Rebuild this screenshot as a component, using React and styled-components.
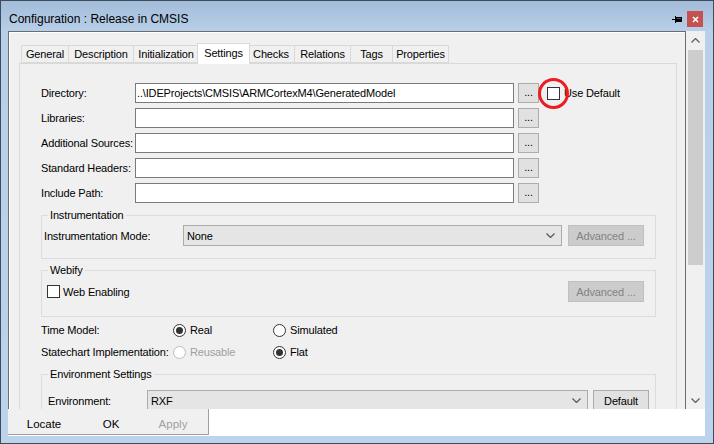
import React from "react";
import styled, { createGlobalStyle } from "styled-components";

const GlobalStyle = createGlobalStyle`
  html, body { margin: 0; padding: 0; background: #fff; }
  body {
    font-family: "Liberation Sans", Arial, sans-serif;
    font-size: 11px;
    letter-spacing: -0.15px;
    color: #000;
  }
  * { box-sizing: border-box; }
`;

const Window = styled.div`
  width: 714px;
  height: 444px;
  display: flex;
  flex-direction: column;
  border: 1px solid #3f4c5c;
  background: linear-gradient(#a3bcd9 0, #b7cfe8 30px, #bcd3eb 100%);
  padding: 0 8px 7px 7px;
`;

const TitleBar = styled.div`
  height: 30px;
  flex: none;
  display: flex;
  align-items: center;
  padding-top: 6px;
`;

const Title = styled.div`
  flex: 1;
  font-size: 12px;
  letter-spacing: 0;
  padding-left: 1px;
`;

const Pin = styled.svg`
  margin-right: 5px;
  display: block;
`;

const CloseBox = styled.div`
  width: 16px;
  height: 16px;
  margin-right: 2px;
  background: #c75050;
  display: flex;
  align-items: center;
  justify-content: center;
`;

const Client = styled.div`
  flex: 1;
  display: flex;
  flex-direction: column;
  background: #fff;
  min-height: 0;
`;

const ScrollArea = styled.div`
  height: 378px;
  flex: none;
  display: flex;
`;

const Viewport = styled.div`
  flex: 1;
  overflow: hidden;
  background: #f0f0f0;
  border: 1px solid #6d6d6d;
  border-bottom: none;
  box-shadow: inset 1px 1px 0 #fff;
  padding: 11px 8px 0 10px;
`;

const Scrollbar = styled.div`
  width: 19px;
  flex: none;
  background: #f0f0f0;
  display: flex;
  flex-direction: column;
`;

const ArrowBox = styled.div`
  height: 17px;
  flex: none;
  display: flex;
  align-items: center;
  justify-content: center;
  margin-top: ${(p) => (p.$top ? "1px" : "0")};
`;

const Thumb = styled.div`
  height: 215px;
  margin: 1px 2px 0 2px;
  background: #cdcdcd;
`;

const Spacer = styled.div`
  flex: 1;
`;

const BottomBar = styled.div`
  flex: 1;
  display: flex;
  background: #fff;
`;

const Toolbar = styled.div`
  width: 201px;
  height: 26px;
  display: flex;
  background: #f0f0f0;
  border-right: 1px solid #a0a0a0;
  border-bottom: 1px solid #a0a0a0;
`;

const ToolButton = styled.button`
  width: ${(p) => p.$w}px;
  height: 100%;
  border: none;
  background: transparent;
  padding: 4px 0 0 0;
  font-family: inherit;
  font-size: 11.5px;
  letter-spacing: 0;
  color: ${(p) => (p.disabled ? "#a0a0a0" : "#000")};
`;

const TabStrip = styled.div`
  display: flex;
  align-items: flex-end;
  height: 20px;
  padding-left: 2px;
  position: relative;
  z-index: 1;
`;

const Tab = styled.div`
  width: ${(p) => p.$w}px;
  height: ${(p) => (p.$active ? 21 : 18)}px;
  margin: ${(p) => (p.$active ? "0 -2px -1px -2px" : "0 0 0 -1px")};
  border: 1px solid #d9d9d9;
  border-bottom: ${(p) => (p.$active ? "none" : "1px solid #d9d9d9")};
  background: ${(p) => (p.$active ? "#fff" : "#f0f0f0")};
  display: flex;
  align-items: center;
  justify-content: center;
  white-space: nowrap;
  padding-bottom: ${(p) => (p.$active ? "3px" : "0")};
  position: relative;
  z-index: ${(p) => (p.$active ? 2 : 1)};
  &:first-child { margin-left: ${(p) => (p.$active ? "-2px" : "0")}; }
`;

const Panel = styled.div`
  width: 658px;
  border: 1px solid #d9d9d9;
  background: #f0f0f0;
  padding: 19px 20px 40px 21px;
`;

const PathRows = styled.div`
  display: flex;
  flex-direction: column;
  gap: 5px;
`;

const PathRow = styled.div`
  display: flex;
  align-items: center;
  height: 20px;
`;

const Label = styled.div`
  width: ${(p) => p.$w}px;
  flex: none;
  white-space: nowrap;
  color: ${(p) => (p.$muted ? "#a0a0a0" : "#000")};
`;

const TextField = styled.input`
  width: 379px;
  height: 20px;
  border: 1px solid #7a7a7a;
  background: #fff;
  font-family: inherit;
  font-size: 11px;
  letter-spacing: -0.15px;
  padding: 0 1px;
  color: #000;
  outline: none;
`;

const SmallButton = styled.div`
  width: 21px;
  height: 20px;
  margin-left: 4px;
  background: #e1e1e1;
  border: 1px solid #adadad;
  display: flex;
  align-items: flex-end;
  justify-content: center;
  padding-bottom: 4px;
  line-height: 1;
`;

const CheckWrap = styled.label`
  display: flex;
  align-items: center;
  gap: ${(p) => p.$gap}px;
  margin-left: ${(p) => p.$ml || 0}px;
  white-space: nowrap;
  position: relative;
`;

const Box = styled.span`
  width: 13px;
  height: 13px;
  border: 1px solid #333;
  background: #fff;
  display: block;
  flex: none;
`;

const Highlight = styled.span`
  position: absolute;
  left: -9px;
  top: 50%;
  width: 31px;
  height: 31px;
  margin-top: -15.5px;
  border: 3.5px solid #ed1c24;
  border-radius: 50%;
`;

const Group = styled.fieldset`
  margin: ${(p) => p.$mt}px 0 0 0;
  width: 615px;
  padding: 0;
  border: 1px solid #dcdcdc;
  min-width: 0;
`;

const Legend = styled.legend`
  margin-left: 6px;
  padding: 0 2px;
  line-height: 12px;
  font-size: 11px;
`;

const GroupBody = styled.div`
  display: flex;
  align-items: center;
  justify-content: ${(p) => (p.$split ? "space-between" : "flex-start")};
  padding: ${(p) => p.$pad};
`;

const Combo = styled.div`
  width: ${(p) => p.$w}px;
  height: 21px;
  flex: none;
  background: #e5e5e5;
  border: 1px solid #acacac;
  display: flex;
  align-items: center;
  justify-content: space-between;
  padding: 0 6px 0 3px;
`;

const PushButton = styled.div`
  width: ${(p) => p.$w}px;
  height: 21px;
  flex: none;
  margin-left: ${(p) => p.$ml || 0}px;
  background: ${(p) => (p.$disabled ? "#cccccc" : "#e1e1e1")};
  border: 1px solid ${(p) => (p.$disabled ? "#bfbfbf" : "#adadad")};
  color: ${(p) => (p.$disabled ? "#838383" : "#000")};
  display: flex;
  align-items: center;
  justify-content: center;
  white-space: nowrap;
`;

const RadioGrid = styled.div`
  display: grid;
  grid-template-columns: 132px 100px auto;
  grid-auto-rows: 18px;
  row-gap: 4px;
  align-items: center;
  margin-top: 4px;
`;

const RadioItem = styled.label`
  display: flex;
  align-items: center;
  gap: 4px;
  white-space: nowrap;
  color: ${(p) => (p.$disabled ? "#a0a0a0" : "#000")};
`;

const RadioDot = styled.span`
  width: 13px;
  height: 13px;
  border-radius: 50%;
  border: 1px solid ${(p) => (p.$disabled ? "#bcbcbc" : "#333")};
  background: #fff;
  display: flex;
  align-items: center;
  justify-content: center;
  &::after {
    content: "";
    width: 7px;
    height: 7px;
    border-radius: 50%;
    background: ${(p) => (p.$checked ? "#333" : "transparent")};
  }
`;

const Chevron = ({ color = "#5a5a5a", up }) => (
  <svg width="9" height="5" viewBox="0 0 9 5">
    <polyline
      points={up ? "0.5,4.5 4.5,0.5 8.5,4.5" : "0.5,0.5 4.5,4.5 8.5,0.5"}
      fill="none"
      stroke={color}
      strokeWidth="1.3"
    />
  </svg>
);

const tabs = [
  ["General", 48],
  ["Description", 66],
  ["Initialization", 66],
  ["Settings", 53],
  ["Checks", 48],
  ["Relations", 57],
  ["Tags", 43],
  ["Properties", 57],
];

const paths = [
  ["Directory:", "..\\IDEProjects\\CMSIS\\ARMCortexM4\\GeneratedModel"],
  ["Libraries:", ""],
  ["Additional Sources:", ""],
  ["Standard Headers:", ""],
  ["Include Path:", ""],
];

function Radio({ label, checked, disabled }) {
  return (
    <RadioItem $disabled={disabled}>
      <RadioDot $checked={checked} $disabled={disabled} />
      {label}
    </RadioItem>
  );
}

export default function App() {
  return (
    <>
      <GlobalStyle />
      <Window>
        <TitleBar>
          <Title>Configuration : Release in CMSIS</Title>
          <Pin width="10" height="7" viewBox="0 0 10 7">
            <rect x="0" y="3" width="3" height="1" fill="#000" />
            <rect x="3" y="0" width="1" height="7" fill="#000" />
            <rect x="4" y="1" width="6" height="5" fill="#000" />
            <rect x="5" y="2" width="4" height="1" fill="#555" />
          </Pin>
          <CloseBox>
            <svg width="7" height="7" viewBox="0 0 7 7">
              <path d="M1 1 L6 6 M6 1 L1 6" stroke="#fff" strokeWidth="1.6" />
            </svg>
          </CloseBox>
        </TitleBar>
        <Client>
          <ScrollArea>
            <Viewport>
              <TabStrip>
                {tabs.map(([name, w]) => (
                  <Tab key={name} $w={w} $active={name === "Settings"}>
                    {name}
                  </Tab>
                ))}
              </TabStrip>
              <Panel>
                <PathRows>
                  {paths.map(([label, value], i) => (
                    <PathRow key={label}>
                      <Label $w={94}>{label}</Label>
                      <TextField readOnly defaultValue={value} />
                      <SmallButton>...</SmallButton>
                      {i === 0 && (
                        <CheckWrap $gap={4} $ml={8}>
                          <Box />
                          Use Default
                          <Highlight />
                        </CheckWrap>
                      )}
                    </PathRow>
                  ))}
                </PathRows>

                <Group $mt={6}>
                  <Legend>Instrumentation</Legend>
                  <GroupBody $pad="4px 11px 12px 2px">
                    <Label $w={139}>Instrumentation Mode:</Label>
                    <Combo $w={379}>
                      <span>None</span>
                      <Chevron />
                    </Combo>
                    <PushButton $w={76} $ml={6} $disabled>
                      Advanced ...
                    </PushButton>
                  </GroupBody>
                </Group>

                <Group $mt={5}>
                  <Legend>Webify</Legend>
                  <GroupBody $split $pad="5px 11px 14px 5px">
                    <CheckWrap $gap={3}>
                      <Box />
                      Web Enabling
                    </CheckWrap>
                    <PushButton $w={76} $disabled>
                      Advanced ...
                    </PushButton>
                  </GroupBody>
                </Group>

                <RadioGrid>
                  <Label $w={132}>Time Model:</Label>
                  <Radio label="Real" checked />
                  <Radio label="Simulated" />
                  <Label $w={132}>Statechart Implementation:</Label>
                  <Radio label="Reusable" disabled />
                  <Radio label="Flat" checked />
                </RadioGrid>

                <Group $mt={7}>
                  <Legend>Environment Settings</Legend>
                  <GroupBody $pad="10px 6px 12px 6px">
                    <Label $w={99}>Environment:</Label>
                    <Combo $w={441}>
                      <span>RXF</span>
                      <Chevron />
                    </Combo>
                    <PushButton $w={56} $ml={5}>
                      Default
                    </PushButton>
                  </GroupBody>
                </Group>
              </Panel>
            </Viewport>
            <Scrollbar>
              <ArrowBox $top>
                <Chevron up color="#606060" />
              </ArrowBox>
              <Thumb />
              <Spacer />
              <ArrowBox>
                <Chevron color="#606060" />
              </ArrowBox>
            </Scrollbar>
          </ScrollArea>
          <BottomBar>
            <Toolbar>
              <ToolButton $w={72}>Locate</ToolButton>
              <ToolButton $w={62}>OK</ToolButton>
              <ToolButton $w={62} disabled>
                Apply
              </ToolButton>
            </Toolbar>
          </BottomBar>
        </Client>
      </Window>
    </>
  );
}
